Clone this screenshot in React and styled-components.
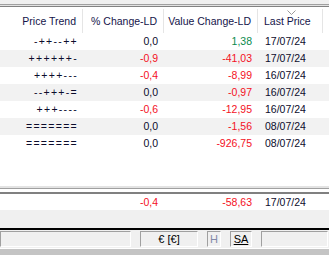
import React from "react";
import styled, { createGlobalStyle } from "styled-components";

const GlobalStyle = createGlobalStyle`
  body {
    margin: 0;
    font-family: "Liberation Sans", Arial, sans-serif;
    font-size: 10.5px;
    background: #fff;
  }
`;

const ROWS = [
  { trend: "-++--++", pct: "0,0", val: "1,38", date: "17/07/24" },
  { trend: "++++++-", pct: "-0,9", val: "-41,03", date: "17/07/24" },
  { trend: "++++---", pct: "-0,4", val: "-8,99", date: "16/07/24" },
  { trend: "--+++-=", pct: "0,0", val: "-0,97", date: "16/07/24" },
  { trend: "+++----", pct: "-0,6", val: "-12,95", date: "16/07/24" },
  { trend: "=======", pct: "0,0", val: "-1,56", date: "08/07/24" },
  { trend: "=======", pct: "0,0", val: "-926,75", date: "08/07/24" },
];

const tone = (s) => (s.startsWith("-") ? "neg" : s === "0,0" ? "flat" : "pos");

const Window = styled.div`
  width: 329px;
  height: 255px;
  overflow: hidden;
  display: flex;
  flex-direction: column;
  background: #fff;
`;

const Rule = styled.div`
  height: ${(p) => p.$h || 1}px;
  background: ${(p) => p.$c};
  flex-shrink: 0;
`;

const Grid = styled.div`
  display: grid;
  grid-template-columns: 83px 81px 94px 65px 1fr;
`;

const HeadRow = styled(Grid)`
  height: 25px;
  background: #fff;
`;

const HeadCell = styled.div`
  position: relative;
  display: flex;
  align-items: center;
  justify-content: ${(p) => (p.$left ? "flex-start" : "flex-end")};
  padding: ${(p) => (p.$left ? "0 0 0 6px" : "0 6px 0 0")};
  margin-top: 1px;
  border-right: 1px solid #e5e5e5;
  color: #14144a;
  white-space: nowrap;
  line-height: 24px;
`;

const SortMark = styled.svg`
  position: absolute;
  top: 1px;
  left: 29px;
`;

const Body = styled.div`
  flex: 1;
`;

const DataRow = styled(Grid)`
  height: 17px;
  line-height: 17px;
  background: ${(p) => (p.$alt ? "#f2f2f2" : "#fff")};
`;

const Cell = styled.div`
  text-align: ${(p) => (p.$left ? "left" : "right")};
  padding: ${(p) => (p.$left ? "0 0 0 7px" : "0 6px 0 0")};
  white-space: nowrap;
  color: ${(p) =>
    p.$tone === "neg" ? "#f4101e" : p.$tone === "pos" ? "#0a8a4c" : "#0c0c2c"};
`;

const TrendCell = styled(Cell)`
  letter-spacing: 1.3px;
  padding-right: 5px;
`;

const TotalRow = styled(DataRow)`
  height: 16px;
  line-height: 16px;
`;

const Band = styled.div`
  height: 18px;
  background: #f0f0f0;
`;

const StatusBar = styled.div`
  display: flex;
  align-items: stretch;
  gap: 9px;
  height: 16px;
  padding-bottom: 1px;
  background: #f0f0f0;
`;

const Panel = styled.div`
  width: ${(p) => p.$w}px;
  box-sizing: border-box;
  border-top: 1px solid #a0a0a0;
  border-left: 1px solid #a0a0a0;
  border-right: 1px solid #fff;
  border-bottom: 1px solid #fff;
  display: flex;
  align-items: center;
  justify-content: center;
  color: ${(p) => (p.$dim ? "#8088a8" : "#000")};
  font-size: 11px;
  line-height: 14px;
  text-decoration: ${(p) => (p.$u ? "underline" : "none")};
  flex-shrink: 0;
`;

export default function App() {
  return (
    <Window>
      <GlobalStyle />
      <Rule $c="#f0f0f0" $h={4} />
      <Rule $c="#a0a0a0" />
      <Rule $c="#e3e3e3" />
      <Rule $c="#828282" />
      <Rule $c="#fff" />
      <HeadRow>
        <HeadCell>Price Trend</HeadCell>
        <HeadCell>% Change-LD</HeadCell>
        <HeadCell>Value Change-LD</HeadCell>
        <HeadCell $left>
          <SortMark width="9" height="5" viewBox="0 0 9 5">
            <path d="M0.5 0.5 L4.5 4.5 L8.5 0.5" fill="none" stroke="#9a9a9a" strokeWidth="1" />
          </SortMark>
          Last Price
        </HeadCell>
        <HeadCell />
      </HeadRow>
      <Body>
        {ROWS.map((r, i) => (
          <DataRow key={i} $alt={i % 2 === 1}>
            <TrendCell>{r.trend}</TrendCell>
            <Cell $tone={tone(r.pct)}>{r.pct}</Cell>
            <Cell $tone={tone(r.val)}>{r.val}</Cell>
            <Cell $left>{r.date}</Cell>
            <Cell />
          </DataRow>
        ))}
      </Body>
      <Rule $c="#e3e3e3" $h={2} />
      <Rule $c="#a0a0a0" $h={1} />
      <Rule $c="#fff" $h={3} />
      <Rule $c="#808080" $h={2} />
      <TotalRow>
        <Cell />
        <Cell $tone="neg">-0,4</Cell>
        <Cell $tone="neg">-58,63</Cell>
        <Cell $left>17/07/24</Cell>
        <Cell />
      </TotalRow>
      <Band />
      <Rule $c="#000" $h={2} />
      <Rule $c="#f0f0f0" $h={1} />
      <StatusBar>
        <Panel $w={131} />
        <Panel $w={58}>€ [€]</Panel>
        <Panel $w={14} $dim>H</Panel>
        <Panel $w={22} $u>SA</Panel>
        <Panel $w={67} />
      </StatusBar>
      <Rule $c="#fff" $h={1} />
      <Rule $c="#c4c4c4" $h={6} />
    </Window>
  );
}
